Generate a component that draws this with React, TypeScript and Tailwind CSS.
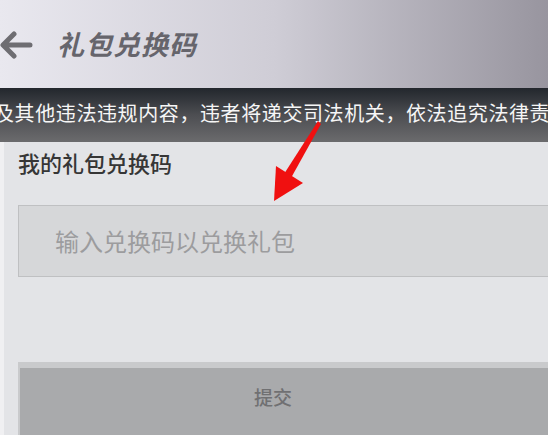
export default function App() {
  const cjk = { fontFamily: '"Noto Sans CJK SC", "Noto Sans", sans-serif' };
  return (
    <div
      className="relative flex h-[435px] w-[548px] flex-col overflow-hidden bg-[#e3e4e7]"
      style={cjk}
    >
      {/* 顶部标题栏 */}
      <div className="flex h-[88px] shrink-0 items-center bg-gradient-to-r from-[#e9e8ef] via-[#cfcdd6] to-[#98959f]">
        <svg width="34" height="30" viewBox="0 0 34 30" className="ml-[-1px] mt-[2px]">
          <path
            d="M31 15 H5 M15 4 L4 15 L15 26"
            fill="none"
            stroke="#6e6d72"
            strokeWidth="5"
            strokeLinecap="round"
            strokeLinejoin="round"
          />
        </svg>
        <span className="ml-[24px] text-[27px] font-bold italic tracking-[1px] text-[#66656c]">
          礼包兑换码
        </span>
      </div>

      {/* 公告栏 */}
      <div className="flex h-[54px] shrink-0 flex-col overflow-hidden bg-gradient-to-b from-[#23272d] via-[#4d4e52] to-[#6b6b6d]">
        <div className="h-[12px] shrink-0" />
        <div className="ml-[-6px] whitespace-nowrap text-[20px] leading-[26px] tracking-[0.6px] text-[#f6f6f6]">
          及其他违法违规内容，违者将递交司法机关，依法追究法律责
        </div>
      </div>

      {/* 内容 */}
      <div className="flex flex-1 flex-col border-l-[4px] border-[#f0f0f2] pl-[14px]">
        <div className="mt-[6px] text-[22px] font-medium leading-[28px] text-[#363636]">
          我的礼包兑换码
        </div>
        <div className="mt-[29px] flex h-[72px] items-center border border-r-0 border-[#bfc0c2] bg-[#d6d7d9] pl-[36px] text-[24px] text-[#9c9c9e]">
          输入兑换码以兑换礼包
        </div>
        <div className="mt-[85px] flex h-[80px] items-start border-t-[6px] border-l-[2px] border-[#c9cacc] bg-[#a9aaac]">
          <div className="flex h-[58px] w-full items-center justify-center pr-[22px] text-[19px] font-medium text-[#707072]">
            提交
          </div>
        </div>
      </div>

      {/* 红色箭头 */}
      <svg
        className="absolute left-0 top-0"
        width="548"
        height="435"
        viewBox="0 0 548 435"
      >
        <path d="M318 121 L321 124 L291 178 L284 174 Z" fill="#f01010" />
        <polygon points="274,201 276,166 303,183" fill="#f01010" />
      </svg>
    </div>
  );
}
